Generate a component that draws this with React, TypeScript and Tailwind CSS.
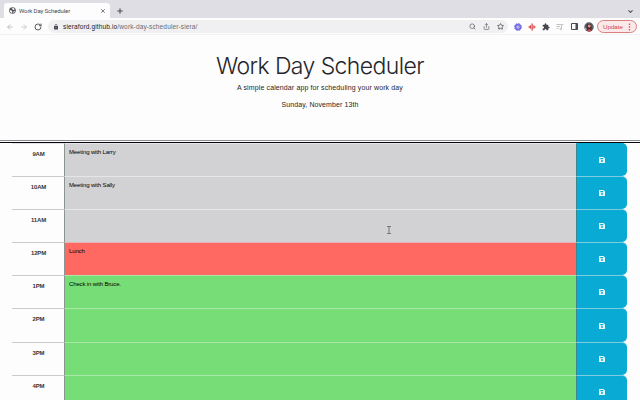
import React from "react";
import { LuSearch } from "react-icons/lu";
import { ArrowLeft, ArrowRight, RotateCw, X, Plus, ChevronDown, Star, Share } from "lucide-react";
import { MdExtension, MdLock } from "react-icons/md";

type Status = "past" | "present" | "future";

const hours: { label: string; text: string; status: Status }[] = [
  { label: "9AM", text: "Meeting with Larry", status: "past" },
  { label: "10AM", text: "Meeting with Sally", status: "past" },
  { label: "11AM", text: "", status: "past" },
  { label: "12PM", text: "Lunch", status: "present" },
  { label: "1PM", text: "Check in with Bruce.", status: "future" },
  { label: "2PM", text: "", status: "future" },
  { label: "3PM", text: "", status: "future" },
  { label: "4PM", text: "", status: "future" },
];

const fill: Record<Status, string> = {
  past: "bg-[#d2d2d4] border-t-[#e6e6e8]",
  present: "bg-[#ff6961] border-t-[#e6b4b6]",
  future: "bg-[#77dd77] border-t-[#a9e8a9]",
};

function SaveIcon() {
  return (
    <svg width="6" height="6" viewBox="0 0 12 12">
      <path fill="#e9f7fb" fillRule="evenodd" d="M1 0h8l3 3v8a1 1 0 0 1-1 1H1a1 1 0 0 1-1-1V1a1 1 0 0 1 1-1zM2.5 2v2.5h6V2zM6 6.2a2 2 0 1 0 0 4 2 2 0 0 0 0-4z" />
    </svg>
  );
}

function TabStrip() {
  return (
    <div className="flex h-[18px] items-end bg-[#dfdee4]">
      <div className="ml-1 flex h-[15px] w-[106px] items-center rounded-t-[3px] bg-[#fdfdfe] pl-[5px] pr-[4px]">
        <svg width="7" height="7" viewBox="0 0 14 14">
          <circle cx="7" cy="7" r="6.6" fill="#55565b" />
          <path fill="#fdfdfe" d="M7 1.6c2 .2 3.600 1.300 4.600 3L9 6 7.500 4.800 6 4zM1.700 6l4 1.600.8 2L6 12.400C3.400 11.800 1.600 9.300 1.700 6zM9 9l3-1c-.3 1.800-1.400 3.300-3 4z" />
        </svg>
        <span className="ml-[3px] whitespace-nowrap font-['Roboto','Liberation_Sans',sans-serif] text-[6px] tracking-[-0.12px] text-[#4a4b50]">Work Day Scheduler</span>
        <X className="ml-auto" size={6} strokeWidth={3} color="#55565b" />
      </div>
      <Plus className="mb-[3px] ml-[6px]" size={8} strokeWidth={3.200} color="#4c4c50" />
      <ChevronDown className="mb-[3px] ml-auto mr-[6px]" size={7} strokeWidth={3.500} color="#505055" />
    </div>
  );
}

function Toolbar() {
  return (
    <div className="flex h-[17px] items-center border-b border-[#f2f2f4] bg-[#fdfdfe] pt-px">
      <ArrowLeft className="ml-[6px]" size={8} strokeWidth={2} color="#a9a9ae" />
      <ArrowRight className="ml-[6px]" size={8} strokeWidth={2} color="#bababe" />
      <RotateCw className="ml-[6px]" size={8} strokeWidth={2.800} color="#505156" />
      <div className="ml-[6px] flex h-[13px] w-[460px] items-center rounded-full bg-[#f0f0f2] pl-[5px] pr-[4px]">
        <MdLock size={6} color="#45464b" />
        <span className="ml-[4px] whitespace-nowrap text-[6.500px] tracking-[0.14px] text-[#6a6b70]">
          <span className="text-[#222226]">sieraford.github.io</span>/work-day-scheduler-siera/
        </span>
        <LuSearch className="ml-auto" size={7} strokeWidth={2.600} color="#66676c" />
        <Share className="ml-[7px]" size={7} strokeWidth={2.400} color="#66676c" />
        <Star className="ml-[7px]" size={7} strokeWidth={2.800} color="#505156" />
      </div>
      <svg className="ml-[6px]" width="8" height="8" viewBox="0 0 16 16">
        <circle cx="8" cy="8" r="5" fill="#b9b2f5" stroke="#7670e8" strokeWidth="3.500" />
        <circle cx="8" cy="8" r="7" fill="none" stroke="#7670e8" strokeWidth="2" strokeDasharray="2.800 2.700" />
      </svg>
      <svg className="ml-[6px]" width="8" height="8" viewBox="0 0 16 16">
        <path d="M0 8L5 4v8zM16 8l-5-4v8z" fill="#e9716f" />
        <path d="M7 1h2.500v14H7zM4 5h2v6H4zM11 5h1.500v6H11z" fill="#d84343" />
      </svg>
      <MdExtension className="ml-[6px]" size={8} color="#47484d" />
      <svg className="ml-[6px]" width="8" height="8" viewBox="0 0 16 16" fill="none" stroke="#bcbcc2" strokeWidth="1.800">
        <path d="M1 3h9M1 7h7M1 11h4M11 12V3h4" />
        <circle cx="9.500" cy="12" r="1.600" />
      </svg>
      <svg className="ml-[7px]" width="7" height="7" viewBox="0 0 14 14">
        <path d="M1 1h12v12H1z" fill="#fdfdfe" stroke="#4c4d52" strokeWidth="2" />
        <path d="M9 1h4v12H9z" fill="#4c4d52" />
      </svg>
      <svg className="ml-[6px]" width="10" height="10" viewBox="0 0 20 20">
        <circle cx="10" cy="10" r="9.500" fill="#59616a" />
        <path d="M5 18V8c0-6 10-6 10 0v10z" fill="#4b282c" />
        <circle cx="10.500" cy="8" r="3" fill="#d79b91" />
        <path d="M6 18c0-5 9-5 9 0-3 2-6 2-9 0z" fill="#c44e51" />
        <path d="M2 11l3 2v4c-2-1-3-3-3-6z" fill="#bac8d2" />
      </svg>
      <div className="ml-[3px] flex h-[13px] w-[40px] items-center rounded-full border border-[#d9807c] bg-[#fbe9e9] pl-[5px]">
        <span className="text-[6.200px] text-[#cf4540]">Update</span>
        <svg className="ml-[5px]" width="3" height="8" viewBox="0 0 3 8" fill="#cf4540">
          <circle cx="1.500" cy="1.300" r=".8" />
          <circle cx="1.500" cy="4" r=".8" />
          <circle cx="1.500" cy="6.700" r=".8" />
        </svg>
      </div>
    </div>
  );
}

export default function App() {
  return (
    <div className="relative h-[400px] w-[640px] overflow-hidden bg-[#fdfdfe] font-['Liberation_Sans',Arial,sans-serif]">
      <TabStrip />
      <Toolbar />
      <header className="flex h-[106px] flex-col items-center border-b border-[#8b8b92] pt-[17px] text-[#26262a]">
        <h1 className="whitespace-nowrap font-['Inter','Liberation_Sans',sans-serif] text-[23px] font-light leading-[28px] tracking-[-0.58px]">Work Day Scheduler</h1>
        <p className="mt-[3px] whitespace-nowrap text-[7px] leading-[10px] tracking-[0.12px]">A simple calendar app for scheduling your work day</p>
        <p className="mt-[7px] whitespace-nowrap text-[7px] leading-[10px] tracking-[0.09px]">Sunday, November 13th</p>
      </header>
      <div className="mt-px h-px bg-[#08080c]" />
      <main className="ml-[12px] w-[615px]">
        {hours.map(({ label, text, status }) => (
          <div key={label} className="group flex h-[33.100px]">
            <div className="w-[52px] border-t border-[#cbcbcf] pl-px pt-[6px] text-center text-[6px] font-bold leading-[8px] tracking-[-0.15px] text-[#36363a] group-first:border-t-[#e4e4e8]">{label}</div>
            <div className={`w-[512px] border-l border-t border-l-[#8c9490] pl-[4px] pt-[4px] text-[6px] leading-[8px] tracking-[-0.14px] text-black ${fill[status]}`}>{text}</div>
            <button className="flex w-[51px] items-center justify-center rounded-r-[5px] border-l border-t border-l-[#3b8791] border-t-[#7fcbe0] bg-[#09abd5] group-first:border-t-[#09abd5]">
              <SaveIcon />
            </button>
          </div>
        ))}
      </main>
      <svg className="absolute left-[386px] top-[226px]" width="6" height="8" viewBox="0 0 6 8" fill="none" stroke="#77777b">
        <path d="M1 .5h4M3 .5v7M1 7.500h4" />
      </svg>
    </div>
  );
}
